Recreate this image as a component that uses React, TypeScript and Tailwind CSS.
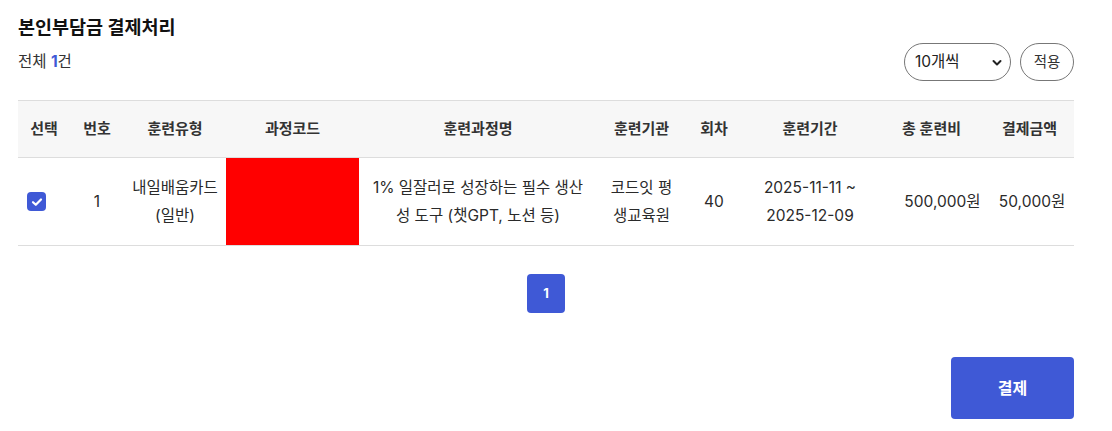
import React from "react";

const font = { fontFamily: 'Inter, "Noto Sans CJK KR", "Noto Sans", sans-serif' };

export default function App() {
  return (
    <div className="w-[1112px] h-[431px] bg-white text-[#333] pl-[18px] pr-[38px] pt-[13px]" style={font}>
      <h1 className="text-[18.5px] leading-[28px] font-bold text-[#111]">본인부담금 결제처리</h1>
      <div className="mt-[2px] flex items-center justify-between h-[38px]">
        <div className="text-[15.5px] text-[#333]">
          전체 <span className="font-bold text-[#3f59d6]">1</span>건
        </div>
        <div className="flex items-center gap-[9px]">
          <div className="relative w-[107px] h-[38px] rounded-full border border-[#777] flex items-center pl-[10px] text-[15.5px] text-[#222]">
            10개씩
            <svg className="absolute right-[8px] top-[15px]" width="10" height="8" viewBox="0 0 10 8">
              <path d="M1.5 2 L5 5.5 L8.5 2" stroke="#222" strokeWidth="2" fill="none" strokeLinecap="round" strokeLinejoin="round" />
            </svg>
          </div>
          <button className="w-[54px] h-[38px] rounded-full border border-[#777] text-[14.5px] text-[#333] bg-white">적용</button>
        </div>
      </div>
      <table className="mt-[19px] w-[1056px] table-fixed border-collapse">
        <colgroup>
          <col className="w-[52px]" />
          <col className="w-[54px]" />
          <col className="w-[102px]" />
          <col className="w-[133px]" />
          <col className="w-[238px]" />
          <col className="w-[89px]" />
          <col className="w-[56px]" />
          <col className="w-[136px]" />
          <col className="w-[107px]" />
          <col className="w-[89px]" />
        </colgroup>
        <thead>
          <tr className="h-[57px] bg-[#f7f7f7] border-t border-b border-[#dddddd]">
            {["선택", "번호", "훈련유형", "과정코드", "훈련과정명", "훈련기관", "회차", "훈련기간", "총 훈련비", "결제금액"].map((h) => (
              <th key={h} className="text-[15px] font-semibold text-[#333] text-center p-0">{h}</th>
            ))}
          </tr>
        </thead>
        <tbody>
          <tr className="h-[88px] border-b border-[#dddddd] text-[15.5px] leading-[28px] text-[#2a2a2a] text-center">
            <td className="p-0">
              <span className="ml-[9px] w-[19px] h-[19px] rounded-[4px] bg-[#3f59d6] flex items-center justify-center">
                <svg width="12" height="10" viewBox="0 0 12 10">
                  <path d="M2 5.2 L4.8 7.8 L10 2.5" stroke="white" strokeWidth="2.2" fill="none" strokeLinecap="round" strokeLinejoin="round" />
                </svg>
              </span>
            </td>
            <td className="p-0">1</td>
            <td className="p-0 px-[8px]">내일배움카드<br />(일반)</td>
            <td className="p-0 bg-[#ff0000]"></td>
            <td className="p-0 px-[10px]">1% 일잘러로 성장하는 필수 생산성 도구 (챗GPT, 노션 등)</td>
            <td className="p-0 px-[12px]">코드잇 평생교육원</td>
            <td className="p-0">40</td>
            <td className="p-0">2025-11-11 ~<br />2025-12-09</td>
            <td className="p-0 pl-[22px]">500,000원</td>
            <td className="p-0 pl-[5px]">50,000원</td>
          </tr>
        </tbody>
      </table>
      <div className="mt-[28px] flex justify-center">
        <button className="w-[38px] h-[39px] rounded-[4px] bg-[#3f59d6] text-white text-[13px] font-bold">1</button>
      </div>
      <div className="mt-[44px] flex justify-end">
        <button className="w-[123px] h-[62px] rounded-[4px] bg-[#3f59d6] text-white text-[16px] font-bold">결제</button>
      </div>
    </div>
  );
}
